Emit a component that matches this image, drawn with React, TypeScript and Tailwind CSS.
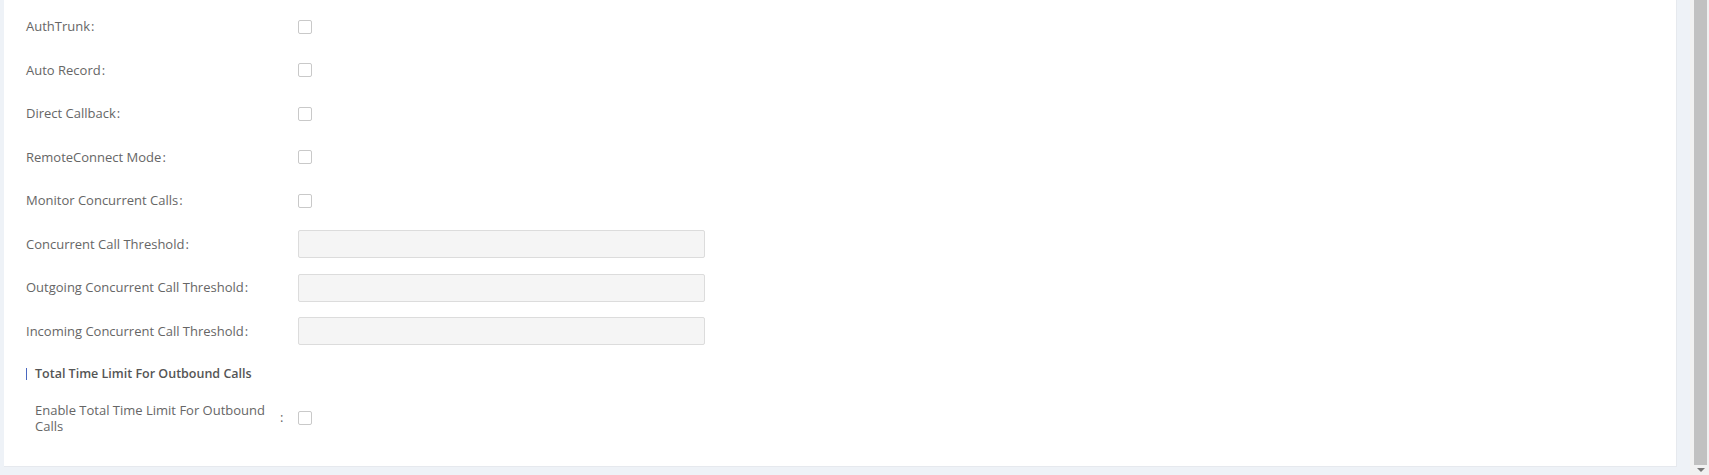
function Checkbox() {
  return <span className="block h-[14px] w-[14px] rounded-[2px] border border-[#c9c9c9] bg-white" />
}

function TextInput() {
  return <div className="h-[28px] w-[407px] rounded-[2px] border border-[#dcdcdc] bg-[#f5f5f5]" />
}

export default function App() {
  const checks = ['AuthTrunk', 'Auto Record', 'Direct Callback', 'RemoteConnect Mode', 'Monitor Concurrent Calls']
  const inputs = ['Concurrent Call Threshold', 'Outgoing Concurrent Call Threshold', 'Incoming Concurrent Call Threshold']
  return (
    <div className="flex h-[475px] w-full overflow-hidden bg-[#eef2f7] text-[13px] text-[#666]" style={{ fontFamily: '"Open Sans", "Noto Sans", sans-serif' }}>
      <div className="flex-1 pb-[8px] pl-[4px] pr-[13px]">
        <div className="h-full border-r border-b border-[#e6e9ee] bg-white pl-[22px] pt-[5px]">
          {checks.map(l => (
            <div key={l} className="flex h-[43.5px] items-center">
              <div className="w-[272px]">{l}<span className="ml-[1px]">:</span></div>
              <Checkbox />
            </div>
          ))}
          {inputs.map(l => (
            <div key={l} className="flex h-[43.5px] items-center">
              <div className="w-[272px]">{l}<span className="ml-[1px]">:</span></div>
              <TextInput />
            </div>
          ))}
          <div className="flex h-[42px] items-center">
            <span className="mr-[8px] h-[12px] w-px bg-[#4a68c0]" />
            <span className="text-[12.5px] font-semibold text-[#555]">Total Time Limit For Outbound Calls</span>
          </div>
          <div className="flex h-[46px] items-center pl-[9px]">
            <div className="flex w-[263px] items-center">
              <div className="w-[238px] leading-[16px]">Enable Total Time Limit For Outbound Calls</div>
              <span className="ml-[7px]">:</span>
            </div>
            <Checkbox />
          </div>
        </div>
      </div>
      <div className="flex w-[19px] flex-col bg-[#f1f1f1] pl-[2px]">
        <div className="mx-[2px] flex-1 bg-[#c1c1c1]" />
        <div className="flex h-[10px] items-center justify-center">
          <span className="h-0 w-0 border-x-[4px] border-t-[4px] border-x-transparent border-t-[#777]" />
        </div>
      </div>
    </div>
  )
}
